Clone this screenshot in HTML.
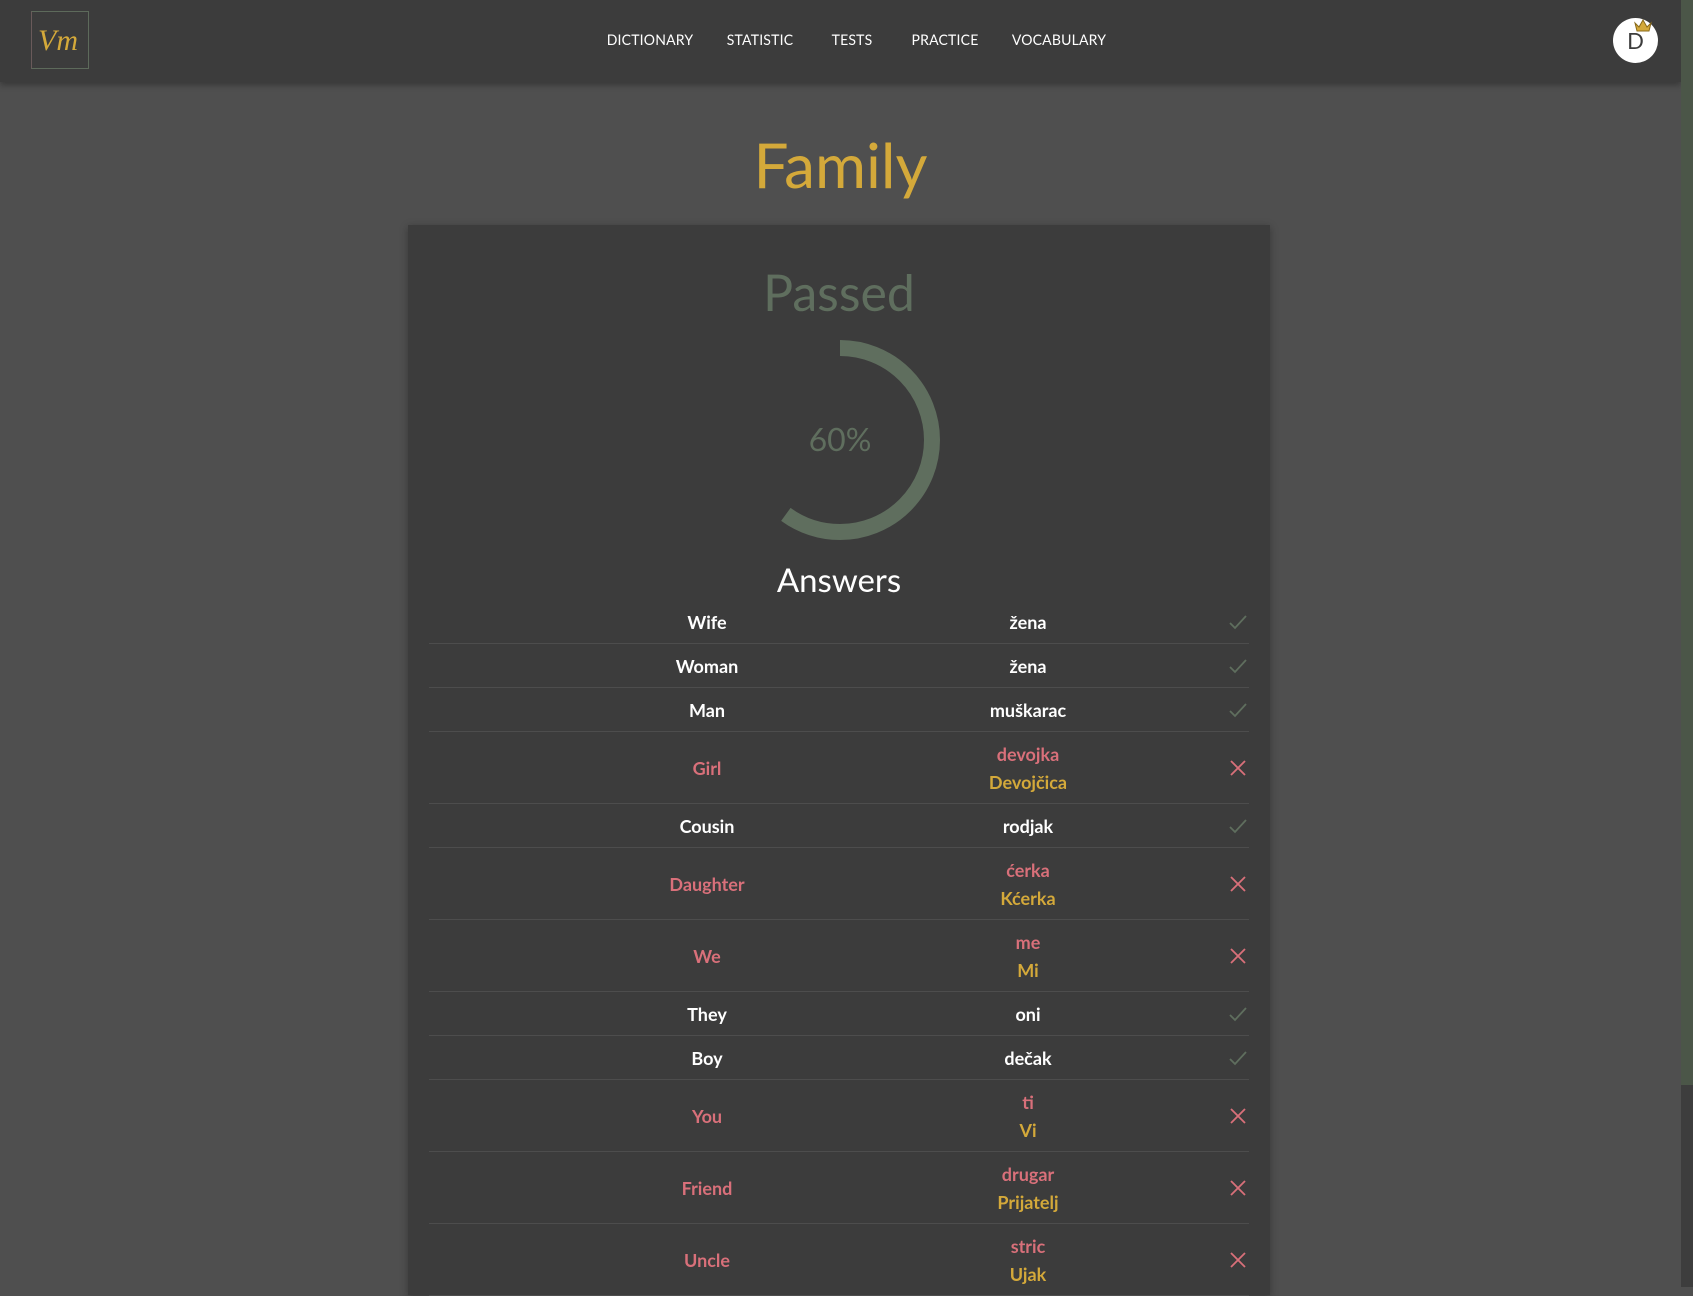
<!DOCTYPE html>
<html><head><meta charset="utf-8"><style>
*{margin:0;padding:0;box-sizing:border-box}
body{width:1693px;height:1287px;overflow:hidden;background:#4f4f4f;font-family:"Lato","Liberation Sans",sans-serif;position:relative}
.hdr{position:absolute;left:0;top:0;width:1681px;height:82px;background:#3c3c3c;box-shadow:0 3px 6px rgba(0,0,0,.3)}
.sb{position:absolute;right:0;top:0;width:12px;height:1287px;background:#3d3d3d}
.sb div{width:12px;height:1085px;background:#4b5648}
.nav{position:absolute;top:31px;font-size:14px;color:#fff;transform:translateX(-50%);letter-spacing:.2px}
.logo{position:absolute;left:31px;top:11px;width:58px;height:58px;border:1px solid #5d6a5b;border-left-color:#6a5a5a;border-bottom-color:#5d6a5b}
.logo span{position:absolute;left:6px;top:12px;font:italic 30px "Liberation Serif",serif;color:#d4a93a}
.av{position:absolute;left:1613px;top:18px;width:45px;height:45px;border-radius:50%;background:#fff;color:#3c3c3c;font-size:22px;text-align:center;line-height:45px}
h1{position:absolute;left:0;width:1681px;top:128px;text-align:center;font-size:62px;font-weight:normal;color:#d4a93a}
.card{position:absolute;left:408px;top:225px;width:862px;height:1070px;background:#3c3c3c;box-shadow:0 2px 8px rgba(0,0,0,.3)}
.passed{position:absolute;left:0;width:862px;top:37px;text-align:center;font-size:50px;color:#5f6e5e}
.ans{position:absolute;left:0;width:862px;top:335px;text-align:center;font-size:33px;color:#fff}
.rows{position:absolute;left:429px;top:600px;width:820px}
.r{position:relative;border-bottom:1px solid #4d4d4d;font-weight:bold;font-size:18px;color:#fff}
.r.s{height:44px}.r.d{height:72px}
.r .a{position:absolute;left:0;width:556px;text-align:center;top:50%;transform:translateY(-50%)}
.r .b{position:absolute;left:499px;width:200px;text-align:center;top:50%;transform:translateY(-50%);line-height:28px}
.r .i{position:absolute;left:799px;top:50%;transform:translateY(-50%)}
.bad .a,.bad .b1{color:#d9707a}.b2{color:#d4a93a}
</style></head><body>
<div class="hdr">
<div class="logo"><span>Vm</span></div>
<div class="nav" style="left:650px">DICTIONARY</div>
<div class="nav" style="left:760px">STATISTIC</div>
<div class="nav" style="left:852px">TESTS</div>
<div class="nav" style="left:945px">PRACTICE</div>
<div class="nav" style="left:1059px">VOCABULARY</div>
<div class="av">D</div>
<svg style="position:absolute;left:1633px;top:18px" width="20" height="16" viewBox="0 0 20 16"><path d="M2 5 L6 9 L10 2 L14 9 L18 5 L16 13 L4 13 Z" fill="#d4a93a" stroke="#8a6a1a" stroke-width="1"/></svg>
</div>
<div class="sb"><div></div></div>
<h1>Family</h1>
<div class="card">
<div class="passed">Passed</div>
<svg style="position:absolute;left:332px;top:115px" width="200" height="200" viewBox="0 0 200 200"><circle cx="100" cy="100" r="92" fill="none" stroke="#5f6e5e" stroke-width="16" stroke-dasharray="346.8 1000" transform="rotate(-90 100 100)"/><text x="100" y="111" text-anchor="middle" font-size="32" fill="#5f6e5e" font-family="Lato,Liberation Sans,sans-serif">60%</text></svg>
<div class="ans">Answers</div>
</div>
<div class="rows">
<div class="r s"><div class="a">Wife</div><div class="b">žena</div><svg class="i" width="20" height="20"><path d="M2 11 L7 16 L18 4" fill="none" stroke="#5f6e5e" stroke-width="1.8"/></svg></div>
<div class="r s"><div class="a">Woman</div><div class="b">žena</div><svg class="i" width="20" height="20"><path d="M2 11 L7 16 L18 4" fill="none" stroke="#5f6e5e" stroke-width="1.8"/></svg></div>
<div class="r s"><div class="a">Man</div><div class="b">muškarac</div><svg class="i" width="20" height="20"><path d="M2 11 L7 16 L18 4" fill="none" stroke="#5f6e5e" stroke-width="1.8"/></svg></div>
<div class="r d bad"><div class="a">Girl</div><div class="b"><div class="b1">devojka</div><div class="b2">Devojčica</div></div><svg class="i" width="20" height="20"><path d="M3 3 L17 17 M17 3 L3 17" stroke="#d9707a" stroke-width="1.8"/></svg></div>
<div class="r s"><div class="a">Cousin</div><div class="b">rodjak</div><svg class="i" width="20" height="20"><path d="M2 11 L7 16 L18 4" fill="none" stroke="#5f6e5e" stroke-width="1.8"/></svg></div>
<div class="r d bad"><div class="a">Daughter</div><div class="b"><div class="b1">ćerka</div><div class="b2">Kćerka</div></div><svg class="i" width="20" height="20"><path d="M3 3 L17 17 M17 3 L3 17" stroke="#d9707a" stroke-width="1.8"/></svg></div>
<div class="r d bad"><div class="a">We</div><div class="b"><div class="b1">me</div><div class="b2">Mi</div></div><svg class="i" width="20" height="20"><path d="M3 3 L17 17 M17 3 L3 17" stroke="#d9707a" stroke-width="1.8"/></svg></div>
<div class="r s"><div class="a">They</div><div class="b">oni</div><svg class="i" width="20" height="20"><path d="M2 11 L7 16 L18 4" fill="none" stroke="#5f6e5e" stroke-width="1.8"/></svg></div>
<div class="r s"><div class="a">Boy</div><div class="b">dečak</div><svg class="i" width="20" height="20"><path d="M2 11 L7 16 L18 4" fill="none" stroke="#5f6e5e" stroke-width="1.8"/></svg></div>
<div class="r d bad"><div class="a">You</div><div class="b"><div class="b1">ti</div><div class="b2">Vi</div></div><svg class="i" width="20" height="20"><path d="M3 3 L17 17 M17 3 L3 17" stroke="#d9707a" stroke-width="1.8"/></svg></div>
<div class="r d bad"><div class="a">Friend</div><div class="b"><div class="b1">drugar</div><div class="b2">Prijatelj</div></div><svg class="i" width="20" height="20"><path d="M3 3 L17 17 M17 3 L3 17" stroke="#d9707a" stroke-width="1.8"/></svg></div>
<div class="r d bad"><div class="a">Uncle</div><div class="b"><div class="b1">stric</div><div class="b2">Ujak</div></div><svg class="i" width="20" height="20"><path d="M3 3 L17 17 M17 3 L3 17" stroke="#d9707a" stroke-width="1.8"/></svg></div>
</div>
</body></html>
